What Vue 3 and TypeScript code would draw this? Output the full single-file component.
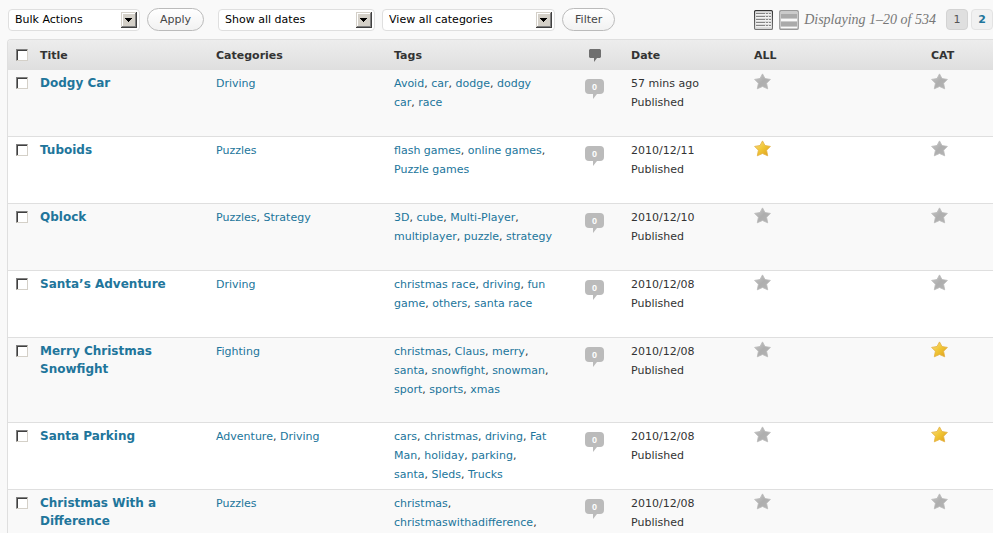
<script setup lang="ts">
import { ref } from 'vue'

interface Post {
  title: string
  categories: string[]
  tags: string[]
  date: string
  all: boolean
  cat: boolean
}

const filters = [
  { id: 'bulk', label: 'Bulk actions', text: 'Bulk Actions', size: 'bulk', button: 'Apply' },
  { id: 'dates', label: 'Filter by date', text: 'Show all dates', size: 'dates', button: '' },
  { id: 'cats', label: 'Filter by category', text: 'View all categories', size: 'cats', button: 'Filter' },
]

const posts = ref<Post[]>([
  { title: 'Dodgy Car', categories: ['Driving'], tags: ['Avoid', 'car', 'dodge', 'dodgy car', 'race'], date: '57 mins ago', all: false, cat: false },
  { title: 'Tuboids', categories: ['Puzzles'], tags: ['flash games', 'online games', 'Puzzle games'], date: '2010/12/11', all: true, cat: false },
  { title: 'Qblock', categories: ['Puzzles', 'Strategy'], tags: ['3D', 'cube', 'Multi-Player', 'multiplayer', 'puzzle', 'strategy'], date: '2010/12/10', all: false, cat: false },
  { title: 'Santa’s Adventure', categories: ['Driving'], tags: ['christmas race', 'driving', 'fun game', 'others', 'santa race'], date: '2010/12/08', all: false, cat: false },
  { title: 'Merry Christmas Snowfight', categories: ['Fighting'], tags: ['christmas', 'Claus', 'merry', 'santa', 'snowfight', 'snowman', 'sport', 'sports', 'xmas'], date: '2010/12/08', all: false, cat: true },
  { title: 'Santa Parking', categories: ['Adventure', 'Driving'], tags: ['cars', 'christmas', 'driving', 'Fat Man', 'holiday', 'parking', 'santa', 'Sleds', 'Trucks'], date: '2010/12/08', all: false, cat: true },
  { title: 'Christmas With a Difference', categories: ['Puzzles'], tags: ['christmas', 'christmaswithadifference', 'difference'], date: '2010/12/08', all: false, cat: false },
])

const flags = ['all', 'cat'] as const
</script>

<template>
  <main class="screen">
    <svg class="defs" width="0" height="0" aria-hidden="true">
      <defs>
        <linearGradient id="gold" x1="0" y1="0" x2="1" y2="1">
          <stop offset="0" stop-color="#fbe08a" />
          <stop offset="0.5" stop-color="#f0c534" />
          <stop offset="1" stop-color="#dd9d1c" />
        </linearGradient>
        <linearGradient id="grey" x1="0" y1="0" x2="1" y2="1">
          <stop offset="0" stop-color="#c9c9c9" />
          <stop offset="0.5" stop-color="#aeaeae" />
          <stop offset="1" stop-color="#b5b5b5" />
        </linearGradient>
        <linearGradient id="frame-on" x1="0" y1="0" x2="0" y2="1">
          <stop offset="0" stop-color="#333" />
          <stop offset="1" stop-color="#777" />
        </linearGradient>
      </defs>
    </svg>

    <div class="toolbar">
      <template v-for="f in filters" :key="f.id">
        <span class="picker" :class="f.size">
          <select :id="f.id" :aria-label="f.label">
            <option>{{ f.text }}</option>
          </select>
          <svg class="arrow" width="16" height="16" viewBox="0 0 16 16" shape-rendering="crispEdges" aria-hidden="true">
            <path fill="#404040" d="M0 0h16v16H0z" />
            <path fill="#d4d0c8" d="M0 0h15v15H0z" />
            <path fill="#808080" d="M1 1h14v14H1z" />
            <path fill="#fff" d="M1 1h13v13H1z" />
            <path fill="#d4d0c8" d="M2 2h12v12H2z" />
            <path fill="#000" d="M4 6h7v1H4zM5 7h5v1H5zM6 8h3v1H6zM7 9h1v1H7z" />
          </svg>
        </span>
        <button v-if="f.button" type="button" class="pill" :class="f.size">{{ f.button }}</button>
      </template>

      <div class="paging">
        <a href="#list" class="mode" aria-label="List view">
          <svg width="20" height="20" viewBox="0 0 20 20" aria-hidden="true">
            <rect x=".6" y=".6" width="17.8" height="18.8" rx="1" fill="#fafafa" stroke="url(#frame-on)" stroke-width="1.2" />
            <path fill="#dcdcdc" d="M2 2h15v16H2z" />
            <path stroke="#858585" d="M2 3.5h9M2 6.5h9M2 9.5h9M2 12.5h9M2 15.5h9" />
            <path stroke="#858585" stroke-dasharray="2 1" d="M12 3.5h5M12 6.5h5M12 9.5h5M12 12.5h5M12 15.5h5" />
            <path stroke="#f3f3f3" d="M2 4.5h15M2 7.5h15M2 10.5h15M2 13.5h15M2 16.5h15" />
          </svg>
        </a>
        <a href="#excerpt" class="mode" aria-label="Excerpt view">
          <svg width="20" height="20" viewBox="0 0 20 20" aria-hidden="true">
            <rect x=".8" y=".8" width="18.4" height="18.4" rx="1" fill="#fafafa" stroke="#999" stroke-width="1.4" />
            <path fill="#aaa" d="M2 4h16v4H2zM2 12h16v4H2z" />
            <path fill="#cbcbcb" d="M2 2h16v2H2zM2 11h16v1H2zM2 8h16v1H2zM2 16h16v1H2z" />
          </svg>
        </a>
        <span class="count">Displaying 1–20 of 534</span>
        <span class="page current">1</span>
        <a href="#page-2" class="page">2</a>
      </div>
    </div>

    <table>
      <colgroup>
        <col class="c-check" /><col class="c-title" /><col class="c-cats" /><col class="c-tags" />
        <col class="c-comments" /><col class="c-date" /><col class="c-all" /><col class="c-cat" />
      </colgroup>
      <thead>
        <tr>
          <th class="check"><input type="checkbox" aria-label="Select all" /></th>
          <th>Title</th>
          <th>Categories</th>
          <th>Tags</th>
          <th class="comments" aria-label="Comments">
            <svg width="12" height="13" viewBox="0 0 12 13" aria-hidden="true">
              <path fill="#6f6f6f" d="M1 0h10l1 1v7l-1 1H8l-3 4V9H1L0 8V1z" />
            </svg>
          </th>
          <th>Date</th>
          <th>ALL</th>
          <th>CAT</th>
        </tr>
      </thead>
      <tbody>
        <tr v-for="p in posts" :key="p.title">
          <td class="check"><input type="checkbox" :aria-label="'Select ' + p.title" /></td>
          <td class="title"><a href="#edit">{{ p.title }}</a></td>
          <td>
            <template v-for="(c, i) in p.categories" :key="c"><template v-if="i">, </template><a href="#category">{{ c }}</a></template>
          </td>
          <td class="tags">
            <template v-for="(t, i) in p.tags" :key="t"><template v-if="i">, </template><a href="#tag">{{ t }}</a></template>
          </td>
          <td class="comments"><a href="#comments" class="bubble">0</a></td>
          <td>{{ p.date }}<br />Published</td>
          <td v-for="k in flags" :key="k" class="flag">
            <button type="button" class="star" :aria-label="k" :aria-pressed="p[k]" @click="p[k] = !p[k]">
              <svg width="17" height="17" viewBox="0 0 17 17" aria-hidden="true">
                <path :fill="p[k] ? 'url(#gold)' : 'url(#grey)'" :stroke="p[k] ? '#e3b040' : '#b9b9b9'" stroke-width="0.8" stroke-linejoin="round" d="M8.5 .9l2.5 4.6 5.4.9-3.8 3.8 1.1 5.6-5.2-2.3-5.2 2.3 1.1-5.6L.6 6.4l5.4-.9z" />
              </svg>
            </button>
          </td>
        </tr>
      </tbody>
    </table>
  </main>
</template>

<style>
body {
  background: #f9f9f9;
}
</style>

<style scoped>
.screen {
  height: 100vh;
  overflow: hidden;
  padding-left: 7px;
  box-sizing: border-box;
  color: #333;
  font: 11px/19px Verdana, "DejaVu Sans", sans-serif;
}
.defs {
  position: absolute;
}
a {
  color: #21759b;
  text-decoration: none;
}
.toolbar {
  display: flex;
  align-items: center;
  height: 39px;
  padding-left: 1px;
}
.picker {
  position: relative;
  flex: none;
}
.picker.bulk { width: 132px; }
.picker.dates { width: 157px; }
.picker.cats { width: 173px; margin-left: 7px; }
select {
  display: block;
  width: 100%;
  height: 22px;
  padding: 0 20px 0 6px;
  border: 1px solid #dfdfdf;
  border-radius: 4px;
  background: #fff;
  color: #000;
  font: inherit;
  appearance: none;
  box-sizing: border-box;
}
.arrow {
  position: absolute;
  top: 3px;
  right: 3px;
  pointer-events: none;
}
.pill {
  height: 23px;
  padding: 0 12px;
  border: 1px solid #bbb;
  border-radius: 12px;
  background: linear-gradient(#fff, #f2f2f2);
  color: #464646;
  font: inherit;
}
.pill.bulk { margin: 0 14px 0 7px; }
.pill.cats { margin-left: 7px; }
.paging {
  display: flex;
  align-items: center;
  margin-left: auto;
}
.mode {
  width: 20px;
  height: 20px;
  margin-right: 5px;
}
.mode svg {
  display: block;
}
.count {
  margin-right: 10px;
  color: #777;
  font: italic 14px/20px Georgia, "Liberation Serif", serif;
  white-space: nowrap;
}
.page {
  width: 22px;
  height: 21px;
  border-radius: 4px;
  border: 1px solid #e3e3e3;
  box-sizing: border-box;
  background: #f1f1f1;
  font-weight: bold;
  line-height: 20px;
  text-align: center;
}
.page.current {
  margin-right: 3px;
  border-color: #d3d3d3;
  background: #dfdfdf;
  color: #555;
  font-weight: normal;
}
table {
  width: 100%;
  table-layout: fixed;
  border-collapse: separate;
  border-spacing: 0;
  border: solid #dfdfdf;
  border-width: 1px 0 0 1px;
  border-radius: 4px 0 0 0;
}
.c-check { width: 24px; }
.c-title { width: 176px; }
.c-cats { width: 178px; }
.c-comments { width: 57px; }
.c-date { width: 123px; }
.c-all { width: 177px; }
.c-cat { width: 70px; }
th {
  height: 30px;
  padding: 0 8px;
  background: linear-gradient(#ededed, #dfdfdf);
  text-align: left;
}
th:first-child {
  border-top-left-radius: 3px;
}
td {
  padding: 4px 8px 0;
  border-bottom: 1px solid #dfdfdf;
  vertical-align: top;
}
tbody tr:nth-child(even) {
  background: #fff;
}
.check {
  padding-right: 0;
}
td.check {
  padding-top: 7px;
}
input {
  display: block;
  width: 12px;
  height: 12px;
  margin: 0;
  border: 1px solid;
  border-color: #808080 #d4d0c8 #d4d0c8 #808080;
  background: #fff;
  box-shadow: inset 1px 1px #404040;
  appearance: none;
}
input:checked {
  background: #21759b;
}
td.title {
  padding-bottom: 44px;
  font-size: 12px;
  font-weight: bold;
  line-height: 18px;
}
td.tags {
  padding-right: 13px;
}
.comments {
  text-align: center;
}
th.comments svg {
  display: block;
  margin: 0 auto;
}
td.comments {
  padding-top: 9px;
}
.bubble {
  position: relative;
  display: block;
  width: 19px;
  height: 15px;
  margin: 0 auto;
  border-radius: 4px;
  background: #bbb;
  color: #fff;
  font: bold 9px/16px "Liberation Sans", sans-serif;
}
.bubble::after {
  content: "";
  position: absolute;
  top: 15px;
  left: 8px;
  border: solid transparent;
  border-width: 0 4px 5px 0;
  border-top: 5px solid #bbb;
  border-bottom: 0;
}
td.flag {
  padding-top: 3px;
}
.star {
  display: block;
  padding: 0;
  border: 0;
  background: none;
}
.star svg {
  display: block;
}
</style>
